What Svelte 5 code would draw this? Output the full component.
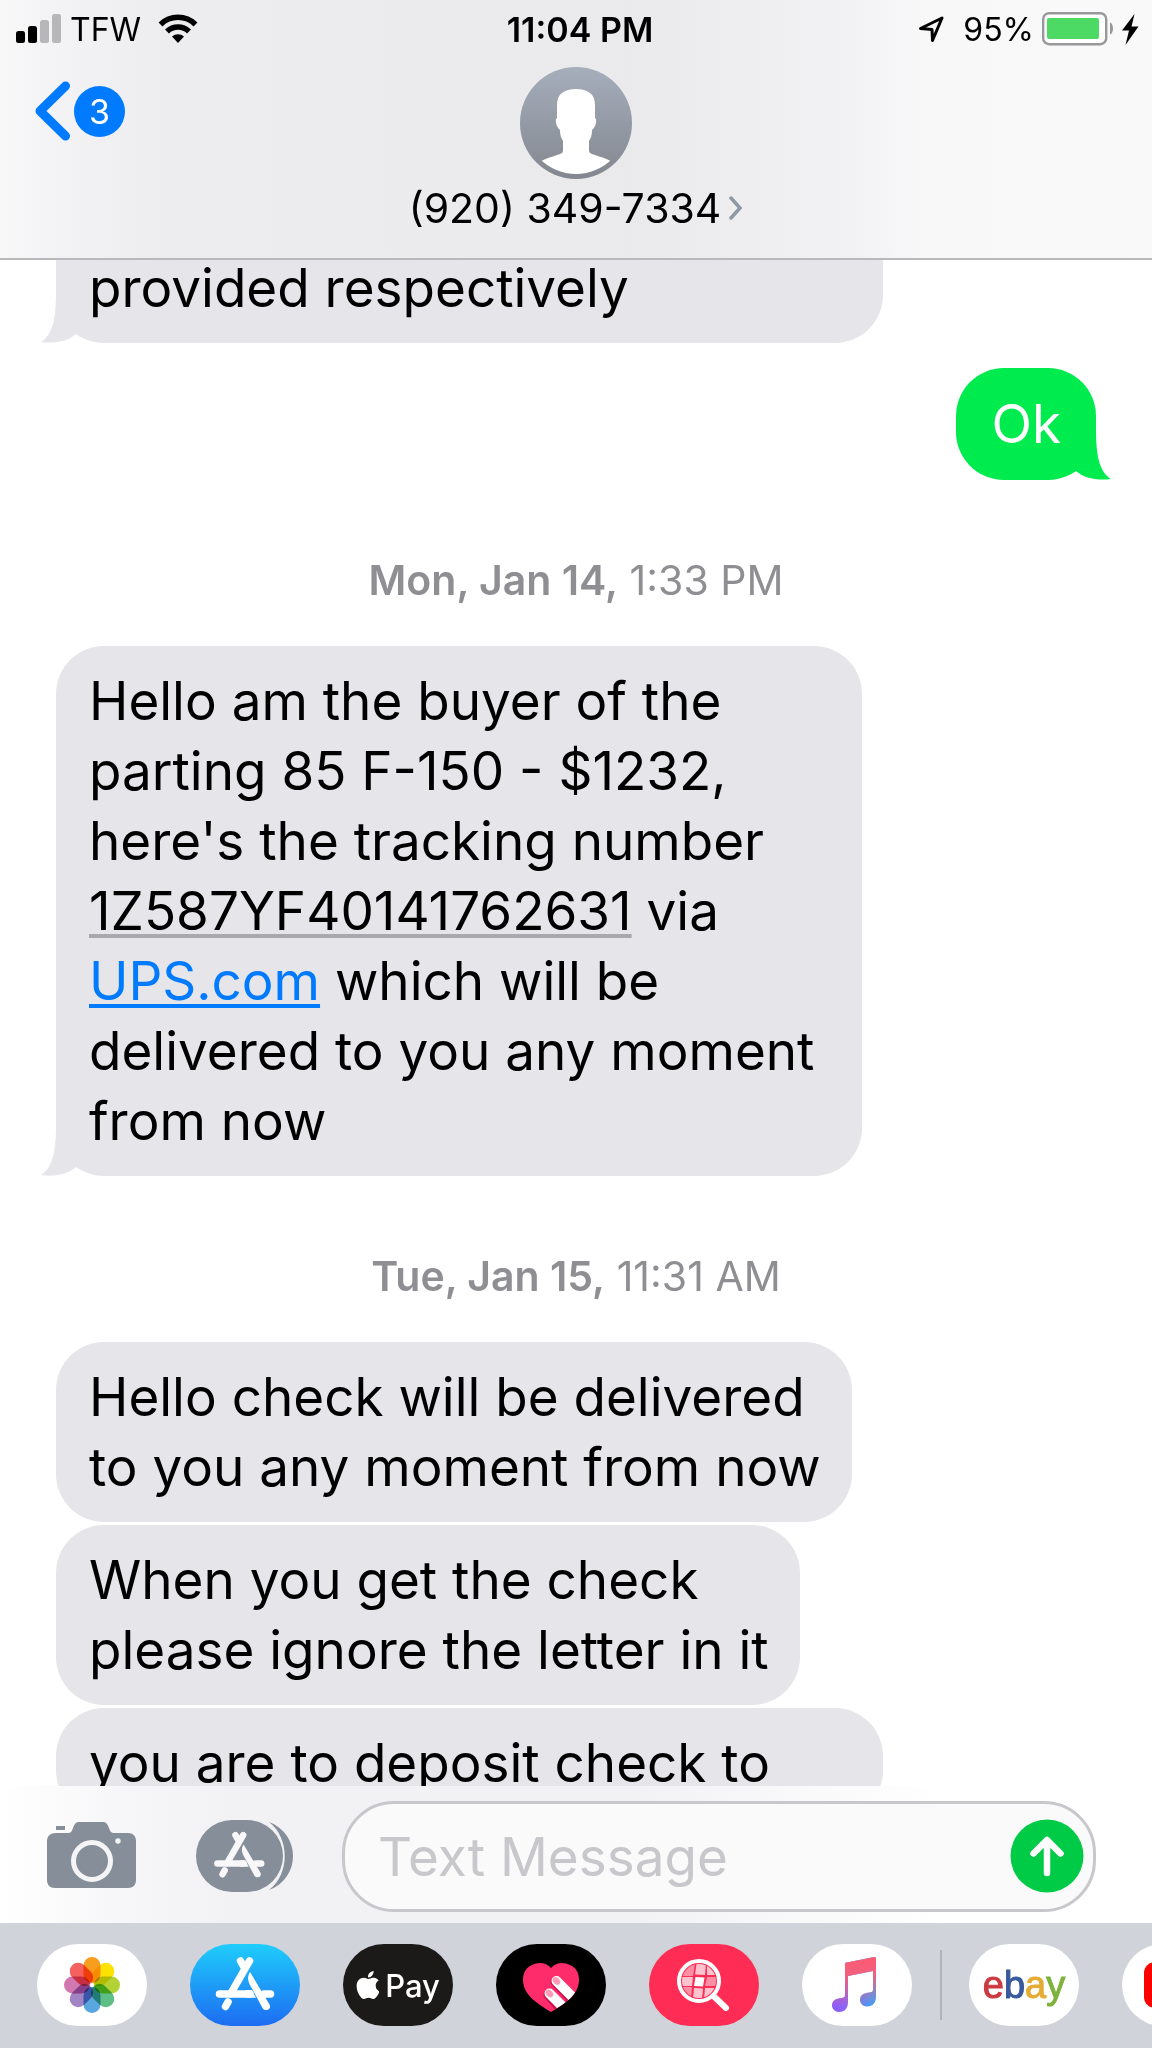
<script>
  const thread = [
    { kind: 'in', parts: [{ text: 'provided respectively' }], width: 79.5, tail: true, continued: true },
    { kind: 'out', parts: [{ text: 'Ok' }], tail: true },
    { kind: 'date', day: 'Mon, Jan 14,', time: '1:33 PM' },
    {
      kind: 'in',
      width: 77.5,
      tail: true,
      parts: [
        { text: "Hello am the buyer of the\nparting 85 F-150 - $1232,\nhere's the tracking number\n" },
        { text: '1Z587YF40141762631', data: true },
        { text: ' via\n' },
        { text: 'UPS.com', href: '#ups' },
        { text: ' which will be\ndelivered to you any moment\nfrom now' }
      ]
    },
    { kind: 'date', day: 'Tue, Jan 15,', time: '11:31 AM' },
    { kind: 'in', width: 76.5, parts: [{ text: 'Hello check will be delivered\nto you any moment from now' }] },
    { kind: 'in', width: 71.5, parts: [{ text: 'When you get the check\nplease ignore the letter in it' }] },
    { kind: 'in', width: 79.5, parts: [{ text: 'you are to deposit check to' }] }
  ];

  const petals = ['#f99d1c', '#fde304', '#b2d235', '#5dbf86', '#5aa6de', '#a283c4', '#d178b0', '#f4615e'];
  let draft = $state('');
</script>

{#snippet storeGlyph()}
  <g fill="none" stroke="currentColor" stroke-width="7.5" stroke-linecap="round">
    <path d="M59.5 17 40.5 50M50.5 17l4 7M29.5 50H60M74 50h6.500M38 58l-2.500 4.500" />
  </g>
  <path fill="currentColor" d="M60 28c-2.500 4-2.500 8-.5 12l13 24c1.500 2.500 4 2.500 6 1.500 1.500-1 2-3 1-5z" />
  <path fill="currentColor" d="M56 46.200h6l4 7.600h-10z" />
{/snippet}

<div class="phone">
  <header>
    <div class="status">
      <div class="status-left">
        <svg width="46" height="30" viewBox="0 0 46 30" aria-label="Signal">
          <rect x="0" y="17" width="9" height="12" rx="2.500" />
          <rect x="12" y="12" width="9" height="17" rx="2.500" />
          <rect x="24" y="6" width="9" height="23" rx="2.500" fill="#b7b7b9" />
          <rect x="36" y="0" width="9" height="29" rx="2.500" fill="#b7b7b9" />
        </svg>
        <span>TFW</span>
        <svg class="wifi" width="40" height="30" viewBox="0 0 40 30" aria-label="Wi-Fi">
          <g fill="none" stroke="#000" stroke-width="5.500">
            <path d="M2.500 10.500a25 25 0 0 1 35 0" />
            <path d="M9 17.500a15.500 15.500 0 0 1 22 0" />
          </g>
          <path d="M20 29l-6-6.500a9 9 0 0 1 12 0z" />
        </svg>
      </div>
      <time>11:04 PM</time>
      <div class="status-right">
        <svg width="27" height="28" viewBox="0 0 27 28" aria-label="Location">
          <path d="M2.500 13.500 24 3l-9.500 22.500-.5-11z" fill="none" stroke="#000" stroke-width="3" stroke-linejoin="round" />
        </svg>
        <span class="percent">95%</span>
        <svg width="98" height="34" viewBox="0 0 98 34" aria-label="Charging">
          <rect x="1.200" y="1.200" width="63" height="31" rx="6" fill="#fff" stroke="#98989b" stroke-width="2.400" />
          <rect x="5" y="6" width="52" height="21" rx="2" fill="#4cd964" />
          <path d="M68 10.500c4 1 4 11 0 12z" fill="#98989b" />
          <path d="M92.500 2 80 18.500h7L83.500 33 96.500 14.500h-7z" />
        </svg>
      </div>
    </div>
    <div class="nav">
      <button class="back" aria-label="Back, 3 unread">
        <svg width="36" height="60" viewBox="0 0 36 60">
          <path d="M30.500 5 5 30l25.500 25" fill="none" stroke="#007aff" stroke-width="9" stroke-linecap="round" stroke-linejoin="round" />
        </svg>
        <span class="unread">3</span>
      </button>
      <button class="contact">
        <svg width="112" height="112" viewBox="0 0 112 112">
          <defs>
            <linearGradient id="avatar" x2="0" y2="1">
              <stop offset="0" stop-color="#a6aebc" />
              <stop offset="1" stop-color="#83878f" />
            </linearGradient>
            <clipPath id="avatar-clip"><circle cx="56" cy="56" r="51" /></clipPath>
          </defs>
          <circle cx="56" cy="56" r="56" fill="url(#avatar)" />
          <path
            clip-path="url(#avatar-clip)"
            fill="#fff"
            d="M56 22c12 0 19 5 19 16v13c2 1 1 6 0 8s-2 3-3 4c0 5-1 8-3 11v9c0 3 2 4 6 5 8 3 14 4 20 9v20H17V97c6-5 12-6 20-9 4-1 6-2 6-5v-9c-2-3-3-6-3-11-1-1-2-2-3-4s-2-7 0-8V38c0-11 7-16 19-16z"
          />
        </svg>
        <span class="number">
          (920) 349-7334
          <svg width="14" height="24" viewBox="0 0 14 24">
            <path d="M2 2l9 10-9 10" fill="none" stroke="#8e98a2" stroke-width="3.500" stroke-linecap="round" />
          </svg>
        </span>
      </button>
    </div>
  </header>

  <main>
    {#each thread as item}
      {#if item.kind === 'date'}
        <p class="date"><strong>{item.day}</strong> {item.time}</p>
      {:else}
        <div
          class="bubble {item.kind}"
          class:continued={item.continued}
          style:width={item.width ? `${item.width}%` : null}
        >
          {#if item.tail}
            <svg class="tail" width="64" height="50" viewBox="0 0 64 50">
              <path d="M15 0C15 24 12 42 0 49c14 2 27-1 35-8L60 0z" fill="currentColor" />
            </svg>
          {/if}
          <p class="text">{#each item.parts as part}{#if part.href}<a href={part.href}>{part.text}</a>{:else if part.data}<span class="tracking">{part.text}</span>{:else}{part.text}{/if}{/each}</p>
        </div>
      {/if}
    {/each}
  </main>

  <form class="compose" onsubmit={(e) => e.preventDefault()}>
    <button type="button" aria-label="Camera">
      <svg width="90" height="74" viewBox="0 0 90 74">
        <path
          fill="#868e99"
          d="M9 14h12c3 0 4-2 5-5 2-5 3-6 7-6h22c4 0 5 1 7 6 1 3 2 5 5 5h14c5 0 8 3 8 8v39c0 5-3 8-8 8H8c-5 0-8-3-8-8V22c0-5 3-8 9-8zM9 7h9v4H9z"
        />
        <circle cx="45" cy="42" r="18.500" fill="none" stroke="#f5f5f7" stroke-width="5" />
        <circle cx="71" cy="22" r="2.700" fill="#f5f5f7" />
      </svg>
    </button>
    <button type="button" class="apps-toggle" aria-label="Apps">
      <svg width="98" height="74" viewBox="0 0 98 74">
        <rect y="1" width="87" height="72" rx="36" fill="#868e99" />
        <path d="M73 3c32 12 32 56 0 68 21-16 21-52 0-68z" fill="#868e99" />
        <g transform="translate(-4 1.500) scale(.86)">{@render storeGlyph()}</g>
      </svg>
    </button>
    <div class="field">
      <input type="text" aria-label="Text Message" placeholder="Text Message" bind:value={draft} />
      <button class="send" aria-label="Send">
        <svg width="74" height="74" viewBox="0 0 74 74">
          <circle cx="37" cy="37" r="36.500" fill="#00cb46" />
          <path d="M37 54V22M23.500 34.500 37 21l13.500 13.500" fill="none" stroke="#fff" stroke-width="6.500" stroke-linecap="round" stroke-linejoin="round" />
        </svg>
      </button>
    </div>
  </form>

  <nav class="drawer" aria-label="iMessage apps">
    <button class="app white" aria-label="Photos">
      <svg width="110" height="82" viewBox="0 0 110 82">
        <g transform="translate(55 41)">
          {#each petals as color, i}
            <rect class="petal" x="-8.500" y="-28" width="17" height="26" rx="8.500" fill={color} transform="rotate({i * 45})" />
          {/each}
          <circle r="2" fill="#fff" />
        </g>
      </svg>
    </button>
    <button class="app store" aria-label="App Store">
      <svg width="110" height="82" viewBox="0 0 110 82">{@render storeGlyph()}</svg>
    </button>
    <button class="app pay" aria-label="Apple Pay">
      <svg width="23" height="28" viewBox="1.800 0 19.500 24">
        <path
          fill="#fff"
          d="M12.152 6.896c-.948 0-2.415-1.078-3.960-1.040-2.040.027-3.910 1.183-4.961 3.014-2.117 3.675-.546 9.103 1.519 12.090 1.013 1.454 2.208 3.090 3.792 3.039 1.520-.065 2.090-.987 3.935-.987 1.831 0 2.350.987 3.960.948 1.637-.026 2.676-1.480 3.676-2.948 1.156-1.688 1.636-3.325 1.662-3.415-.039-.013-3.182-1.221-3.220-4.857-.026-3.040 2.480-4.494 2.597-4.559-1.429-2.090-3.623-2.324-4.390-2.376-2-.156-3.675 1.090-4.610 1.090zM15.530 3.830c.843-1.012 1.400-2.427 1.245-3.830-1.207.052-2.662.805-3.532 1.818-.780.896-1.454 2.338-1.273 3.714 1.338.104 2.715-.688 3.559-1.701"
        />
      </svg>
      <span>Pay</span>
    </button>
    <button class="app black" aria-label="Digital Touch">
      <svg width="110" height="82" viewBox="0 0 110 82">
        <defs>
          <clipPath id="heart">
            <path d="M55 24C60 18 68 18 74 21c7 3 9 9 9 15 0 15-15 24-28 32C42 60 27 51 27 36c0-6 2-12 9-15 6-3 14-3 19 3z" />
          </clipPath>
        </defs>
        <g clip-path="url(#heart)">
          <path fill="#ff2c6b" d="M20 10h70v65H20z" />
          <path d="M52 51l18 20M59 38l28 30" stroke="#c9124c" stroke-width="9" stroke-linecap="round" />
          <path d="M53.500 49.500l20 20M60.500 37l26 26" stroke="#fff" stroke-width="10" stroke-linecap="round" />
          <g fill="#ff9bb6">
            <ellipse cx="53.500" cy="49.500" rx="3.200" ry="4.200" transform="rotate(-45 53.500 49.500)" />
            <ellipse cx="60.500" cy="37" rx="3.200" ry="4.200" transform="rotate(-45 60.500 37)" />
          </g>
        </g>
      </svg>
    </button>
    <button class="app red" aria-label="#images">
      <svg width="110" height="82" viewBox="0 0 110 82">
        <defs><clipPath id="lens"><circle cx="50" cy="37" r="17" /></clipPath></defs>
        <g clip-path="url(#lens)">
          <path fill="#ff8fa5" d="M33 20h13l-2 12H33zM58 33h10v9H56zM33 43h10l-1 12h-9z" />
          <path fill="#ffc3ce" d="M47.500 20H57l-1 11-10-.5zM58 20h10v11H58zM33 33h11l-1 9H33zM45 44l9 .5-1 10.500h-9zM56 44h12v11H55z" />
          <path fill="#fff" d="M46.500 33l9 .5-1.500 9-9-.5z" />
        </g>
        <circle cx="50" cy="37" r="20" fill="none" stroke="#fff" stroke-width="4" />
        <path d="M64.500 52 77 64" stroke="#fff" stroke-width="6" stroke-linecap="round" />
      </svg>
    </button>
    <button class="app white" aria-label="Music">
      <svg width="110" height="82" viewBox="0 0 110 82">
        <defs>
          <linearGradient id="note-base" gradientUnits="userSpaceOnUse" x1="30" y1="60" x2="74" y2="54">
            <stop offset="0" stop-color="#8a5cff" />
            <stop offset=".35" stop-color="#8a66f5" />
            <stop offset="1" stop-color="#35a8fb" />
          </linearGradient>
          <linearGradient id="note-top" gradientUnits="userSpaceOnUse" x1="55" y1="18" x2="58" y2="62">
            <stop offset="0" stop-color="#fb5c74" />
            <stop offset=".3" stop-color="#f0607f" />
            <stop offset="1" stop-color="#fb5c74" stop-opacity="0" />
          </linearGradient>
          <path id="note" d="M45 18.500 72 13c1-.2 2 .3 2 1.500v38c0 6-3 10-9 10-4 0-7-3-7-6.500 0-5 4-7 9-7.500 3-.3 4-1 4-3V27l-25 5v26c0 6-3 10-9 10-4 0-7-3-7-6.500 0-5 4-7 9-7.500 3-.3 4-1 4-3V20c0-1 .6-1.300 1-1.500z" />
        </defs>
        <use href="#note" fill="url(#note-base)" />
        <use href="#note" fill="url(#note-top)" />
      </svg>
    </button>
    <span class="divider"></span>
    <button class="app white ebay" aria-label="ebay">
      <span class="e">e</span><span class="b">b</span><span class="a">a</span><span class="y">y</span>
    </button>
    <button class="app white" aria-label="YouTube">
      <svg width="110" height="82" viewBox="0 0 110 82">
        <rect x="22" y="18" width="66" height="46" rx="11" fill="#f00" />
        <path d="M48 31v20l18-10z" fill="#fff" />
      </svg>
    </button>
  </nav>
</div>

<style>
  :global(body) {
    margin: 0;
    background: #fff;
  }
  .phone {
    display: flex;
    flex-direction: column;
    height: 100vh;
    overflow: hidden;
    font-family: Inter, 'Liberation Sans', sans-serif;
    color: #000;
  }
  button {
    display: flex;
    align-items: center;
    justify-content: center;
    flex: none;
    border: 0;
    padding: 0;
    background: none;
    color: inherit;
    font: inherit;
  }
  svg {
    display: block;
    flex: none;
  }
  p {
    margin: 0;
  }

  header {
    flex: none;
    border-bottom: 2px solid #b9b9bc;
    background: linear-gradient(90deg, #f8f8f9, #f3f3f5 5%, #ededef 14%, #eaeaec 55%, #f2f2f5 74%, #f8f8f9 80%, #f9f9f9);
  }
  .status {
    display: grid;
    grid-template-columns: 1fr auto 1fr;
    align-items: center;
    height: 58px;
    padding: 0 12px 0 16px;
    font-size: 32px;
  }
  .status-left,
  .status-right {
    display: flex;
    align-items: center;
    gap: 8px;
  }
  .status-right {
    justify-content: flex-end;
  }
  .wifi {
    margin-left: 9px;
  }
  .percent {
    margin-left: 10px;
  }
  time {
    padding-left: 4px;
    font-size: 34px;
    font-weight: 600;
  }
  .nav {
    display: grid;
    grid-template-columns: 1fr auto 1fr;
    align-items: start;
    padding: 9px 35px 25px;
  }
  .back {
    justify-self: start;
    gap: 3px;
    padding-top: 14px;
  }
  .unread {
    width: 51px;
    border-radius: 50%;
    background: #007aff;
    color: #fff;
    font-size: 34px;
    line-height: 51px;
    text-align: center;
  }
  .contact {
    flex-direction: column;
    gap: 4px;
  }
  .number {
    display: flex;
    align-items: center;
    gap: 8px;
    font-size: 41px;
    line-height: 50px;
  }

  main {
    display: flex;
    flex: 1;
    flex-direction: column;
    min-height: 0;
    overflow: hidden;
    padding: 0 56px;
  }
  .bubble {
    position: relative;
    isolation: isolate;
    flex: none;
    box-sizing: border-box;
    margin-bottom: 3px;
    border-radius: 48px;
    padding: 20px 20px 20px 33px;
    font-size: 53px;
    line-height: 70px;
  }
  .text {
    white-space: pre-wrap;
  }
  .in {
    align-self: flex-start;
    background: #e5e5ea;
  }
  .out {
    align-self: flex-end;
    margin-top: 22px;
    padding: 21px 35px;
    background: #00eb4e;
    color: #fff;
  }
  .continued {
    margin-top: -7px;
    border-radius: 0 0 48px 48px;
    padding-top: 0;
  }
  .tail {
    position: absolute;
    z-index: -1;
    bottom: 0;
    left: -15px;
    color: #e5e5ea;
  }
  .out .tail {
    right: -15px;
    left: auto;
    color: #00eb4e;
    transform: scaleX(-1);
  }
  .tracking,
  a {
    text-decoration: underline #a8a8ad 4px;
    text-decoration-skip-ink: none;
    text-underline-offset: 4px;
  }
  a {
    color: #007aff;
    text-decoration-color: #007aff;
  }
  .date {
    flex: none;
    margin: 73px 0 42px;
    color: #8e8e93;
    font-size: 41px;
    line-height: 48px;
    text-align: center;
  }
  .date strong {
    font-weight: 600;
  }

  .compose {
    display: flex;
    flex: none;
    align-items: center;
    padding: 15px 56px 11px 47px;
    background: linear-gradient(90deg, #fff, #f7f7f9 10%, #f2f2f5 20%, #f2f2f5 55%, #fff 82%);
  }
  .compose button {
    padding-bottom: 2px;
  }
  .apps-toggle {
    margin: 0 48px 0 59px;
    color: #f8f8fa;
  }
  .field {
    display: flex;
    flex: 1;
    align-items: center;
    box-sizing: border-box;
    min-width: 0;
    height: 111px;
    border: 3px solid #c7c7cc;
    border-radius: 52px;
    padding: 0 9px 0 33px;
    background: #fafafa;
  }
  input {
    flex: 1;
    min-width: 0;
    border: 0;
    padding: 0;
    outline: 0;
    background: none;
    color: #000;
    font: inherit;
    font-size: 53px;
    line-height: 70px;
  }
  input::placeholder {
    color: #c7c7cc;
    opacity: 1;
  }

  .drawer {
    display: flex;
    flex: none;
    align-items: center;
    gap: 43px;
    overflow: hidden;
    padding: 21px 0 22px 37px;
    background: #d1d3da;
  }
  .app {
    width: 110px;
    height: 82px;
    border-radius: 41px;
    overflow: hidden;
  }
  .white {
    background: #fff;
  }
  .black {
    background: #000;
  }
  .red {
    background: #ff2d55;
  }
  .store {
    background: linear-gradient(#1fcdfb, #1d6cf2);
    color: #fff;
  }
  .pay {
    gap: 6px;
    background: #1b1a19;
    color: #fff;
    font-size: 31px;
    font-weight: 500;
  }
  .petal {
    mix-blend-mode: multiply;
  }
  .divider {
    flex: none;
    width: 2px;
    height: 70px;
    margin: 0 -16px 0 -15px;
    background: #b1b3b9;
  }
  .ebay {
    font-family: 'Liberation Sans', sans-serif;
    font-size: 38px;
    -webkit-text-stroke: 1px currentColor;
  }
  .e {
    color: #cb3a41;
  }
  .b {
    color: #39599c;
  }
  .a {
    color: #e6ab35;
  }
  .y {
    color: #7fb23c;
  }
</style>
